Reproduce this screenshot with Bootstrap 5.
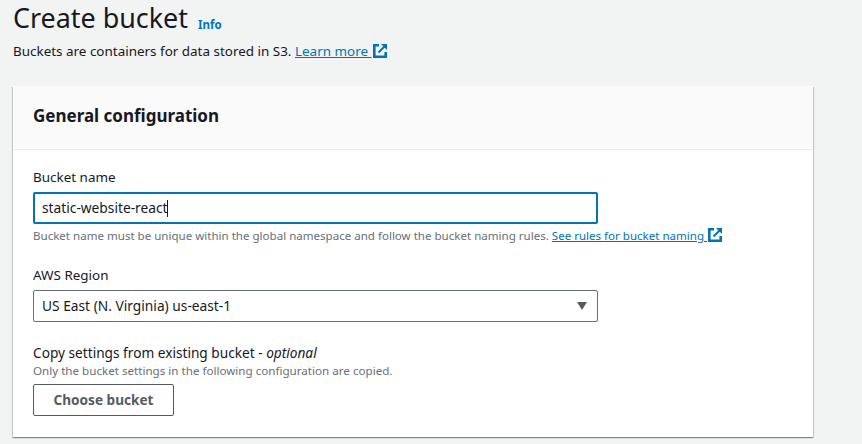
<!DOCTYPE html>
<html lang="en">
<head>
<meta charset="utf-8">
<title>Create bucket</title>
<link href="https://cdn.jsdelivr.net/npm/bootstrap@5.3.0/dist/css/bootstrap.min.css" rel="stylesheet">
<style>
html,body{height:444px;overflow:hidden}
body{background:#f2f3f3;color:#16191f;font-family:"Noto Sans","Open Sans",sans-serif;font-size:13.45px;line-height:20px}
.page-wrap{padding:0 49px 0 13px}
.page-title{font-size:26.9px;line-height:36px;font-weight:400;margin:0;color:#16191f}
.info-link{font-size:11.5px;font-weight:700;color:#0073bb;text-decoration:none;line-height:14px;margin-left:10px;margin-top:18px}
.page-desc{margin:5px 0 0;line-height:20px}
.aws-link{color:#0073bb;text-decoration:underline}
.ext-icon{display:inline-block;vertical-align:-2px;margin-left:1px}
.panel{background:#fff;border:0;border-radius:0;margin-top:25px;box-shadow:0 1px 1px 0 rgba(0,28,36,.3),1px 1px 1px 0 rgba(0,28,36,.15),-1px 1px 1px 0 rgba(0,28,36,.15)}
.panel-head{background:#fafafa;border-bottom:1px solid #eaeded;height:64px;padding:0 20px 3px;border-radius:0}
.panel-title{font-size:17px;line-height:22px;font-weight:700;margin:0}
.panel-body{padding:17px 20px 21px}
.field-label{line-height:20px;margin:0 0 5px;display:block}
.field-box{width:565px;height:32px;border-radius:2px;padding:0 8px;font-size:13.75px;color:#16191f;font-family:inherit;background:#fff}
.field-name{border:2px solid #0073bb;padding:0 7px;line-height:28px}
.caret-bar{display:inline-block;width:1px;height:17px;background:#16191f;vertical-align:-4px;margin-left:-1px}
.field-select{border:1px solid #687078;line-height:30px}
.select-arrow{width:0;height:0;border-left:5.5px solid transparent;border-right:5.5px solid transparent;border-top:8px solid #545b64;margin-right:2px}
.field-hint{font-size:11.56px;line-height:16px;color:#687078;margin:4px 0 0}
.block-gap{margin-top:21px}
.choose-btn{border:1px solid #545b64;border-radius:2px;background:#fff;color:#545b64;font-size:13.6px;font-weight:700;width:141px;height:32px;padding:0;margin-top:5px;line-height:28px}
.choose-btn:hover{background:#fff;color:#545b64;border-color:#545b64}
.tail-label{margin-bottom:0;font-size:13.66px}
.tail-hint{margin-top:0;font-size:11.62px}
.copy-block{margin-top:21px}
</style>
</head>
<body>
<div class="page-wrap">
  <div class="d-flex align-items-start">
    <h1 class="page-title">Create bucket</h1>
    <a class="info-link" href="#">Info</a>
  </div>
  <p class="page-desc">Buckets are containers for data stored in S3. <a class="aws-link" href="#">Learn more <svg class="ext-icon" width="14" height="14" viewBox="0 0 14 14" fill="none" stroke="#0073bb" aria-hidden="true"><path stroke-width="2.6" d="M6 1.3H1.3v11.4h11.4V8"/><path stroke-width="2" d="M5.5 8.5L12 2"/><path fill="#0073bb" stroke="none" d="M8 0h6v6l-2-2-2-2z"/></svg></a></p>

  <div class="card panel">
    <div class="card-header panel-head d-flex align-items-center">
      <h2 class="panel-title">General configuration</h2>
    </div>
    <div class="card-body panel-body">
      <label class="field-label">Bucket name</label>
      <div class="field-box field-name">static-website-react<span class="caret-bar"></span></div>
      <p class="field-hint">Bucket name must be unique within the global namespace and follow the bucket naming rules. <a class="aws-link" href="#">See rules for bucket naming <svg class="ext-icon" width="14" height="14" viewBox="0 0 14 14" fill="none" stroke="#0073bb" aria-hidden="true"><path stroke-width="2.6" d="M6 1.3H1.3v11.4h11.4V8"/><path stroke-width="2" d="M5.5 8.5L12 2"/><path fill="#0073bb" stroke="none" d="M8 0h6v6l-2-2-2-2z"/></svg></a></p>

      <div class="block-gap">
        <label class="field-label">AWS Region</label>
        <div class="field-box field-select d-flex align-items-center justify-content-between">
          <span>US East (N. Virginia) us-east-1</span>
          <span class="select-arrow"></span>
        </div>
      </div>

      <div class="copy-block">
        <label class="field-label tail-label">Copy settings from existing bucket - <em>optional</em></label>
        <p class="field-hint tail-hint">Only the bucket settings in the following configuration are copied.</p>
        <button type="button" class="btn choose-btn">Choose bucket</button>
      </div>
    </div>
  </div>
</div>
</body>
</html>
